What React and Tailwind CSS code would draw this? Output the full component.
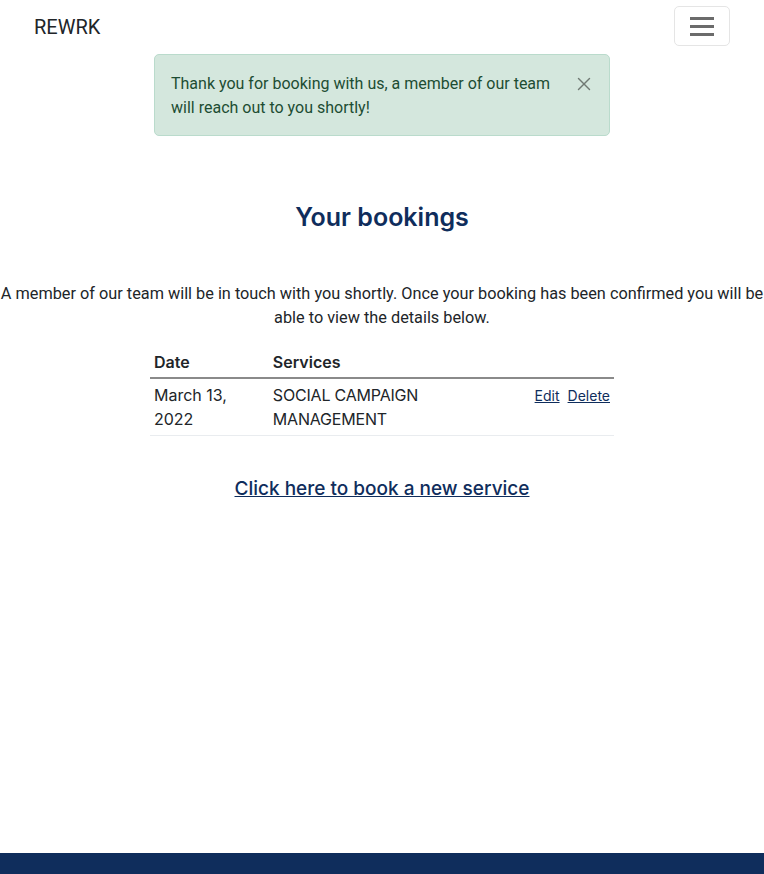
import { X } from "lucide-react";

const navy = "text-[#0f2d5c]";

function Navbar() {
  return (
    <nav className="flex h-[52px] items-center justify-between pl-[34px] pr-[34px]">
      <span className="mt-[1px] text-[20px] leading-[30px] text-[#212529]">REWRK</span>
      <button
        type="button"
        aria-label="Toggle navigation"
        className="flex h-[40px] w-[56px] flex-col items-center justify-center gap-[5px] rounded-[5px] border border-[#e5e5e5]"
      >
        <span className="h-[3px] w-[24px] bg-[#6b6b6b]" />
        <span className="h-[3px] w-[24px] bg-[#6b6b6b]" />
        <span className="h-[3px] w-[24px] bg-[#6b6b6b]" />
      </button>
    </nav>
  );
}

function BookingAlert() {
  return (
    <div className="mx-auto mt-[2px] flex w-[456px] items-start rounded-[5px] border border-[#badbcc] bg-[#d4e7dd] pt-[17px] pb-[15px] pl-[16px] pr-[14px] text-[#1d4d33]">
      <p className="flex-1 text-[16px] leading-[24px]">
        Thank you for booking with us, a member of our team will reach out to you shortly!
      </p>
      <button type="button" aria-label="Close" className="mt-[1px] text-[#707a74]">
        <X size={22} strokeWidth={1.6} />
      </button>
    </div>
  );
}

function BookingsTable() {
  return (
    <table className="mx-auto mt-[16px] w-[464px] border-collapse text-left font-['Inter',sans-serif] text-[16px] leading-[24px] text-[#212529]">
      <thead>
        <tr className="border-b-2 border-[#8a8a8a]">
          <th className="w-[119px] px-[4px] pt-[4px] pb-[3px] font-semibold">Date</th>
          <th className="w-[262px] px-[4px] pt-[4px] pb-[3px] font-semibold">Services</th>
          <th className="px-[4px] pt-[4px] pb-[3px]" />
        </tr>
      </thead>
      <tbody>
        <tr className="border-b border-[#e9ecef]">
          <td className="px-[4px] pt-[4px] pb-[4px] align-top">
            March 13,
            <br />
            2022
          </td>
          <td className="px-[4px] pt-[4px] pb-[4px] align-top tracking-[-0.2px]">
            SOCIAL CAMPAIGN
            <br />
            MANAGEMENT
          </td>
          <td className="px-[4px] pt-[6px] align-top text-[14px] leading-[22px] whitespace-nowrap">
            <a href="#" className={`${navy} underline`}>Edit</a>
            <a href="#" className={`${navy} ml-[8px] underline`}>Delete</a>
          </td>
        </tr>
      </tbody>
    </table>
  );
}

export default function App() {
  return (
    <div className="flex h-[874px] flex-col overflow-hidden bg-white font-['Roboto',sans-serif]">
      <Navbar />
      <main className="flex-1">
        <BookingAlert />
        <h2 className={`mt-[64px] text-center font-['Inter',sans-serif] text-[25px] font-semibold leading-[34px] ${navy}`}>
          Your bookings
        </h2>
        <div className="mt-[48px] flex flex-col items-center text-[16.3px] leading-[24px] text-[#212529]">
          <span className="whitespace-nowrap">
            A member of our team will be in touch with you shortly. Once your booking has been confirmed you will be
          </span>
          <span className="whitespace-nowrap">able to view the details below.</span>
        </div>
        <BookingsTable />
        <div className="mt-[38px] text-center">
          <a href="#" className={`font-['Inter',sans-serif] text-[19px] font-medium leading-[30px] underline ${navy}`}>
            Click here to book a new service
          </a>
        </div>
      </main>
      <footer className="h-[21px] bg-[#0f2d5c]" />
    </div>
  );
}
